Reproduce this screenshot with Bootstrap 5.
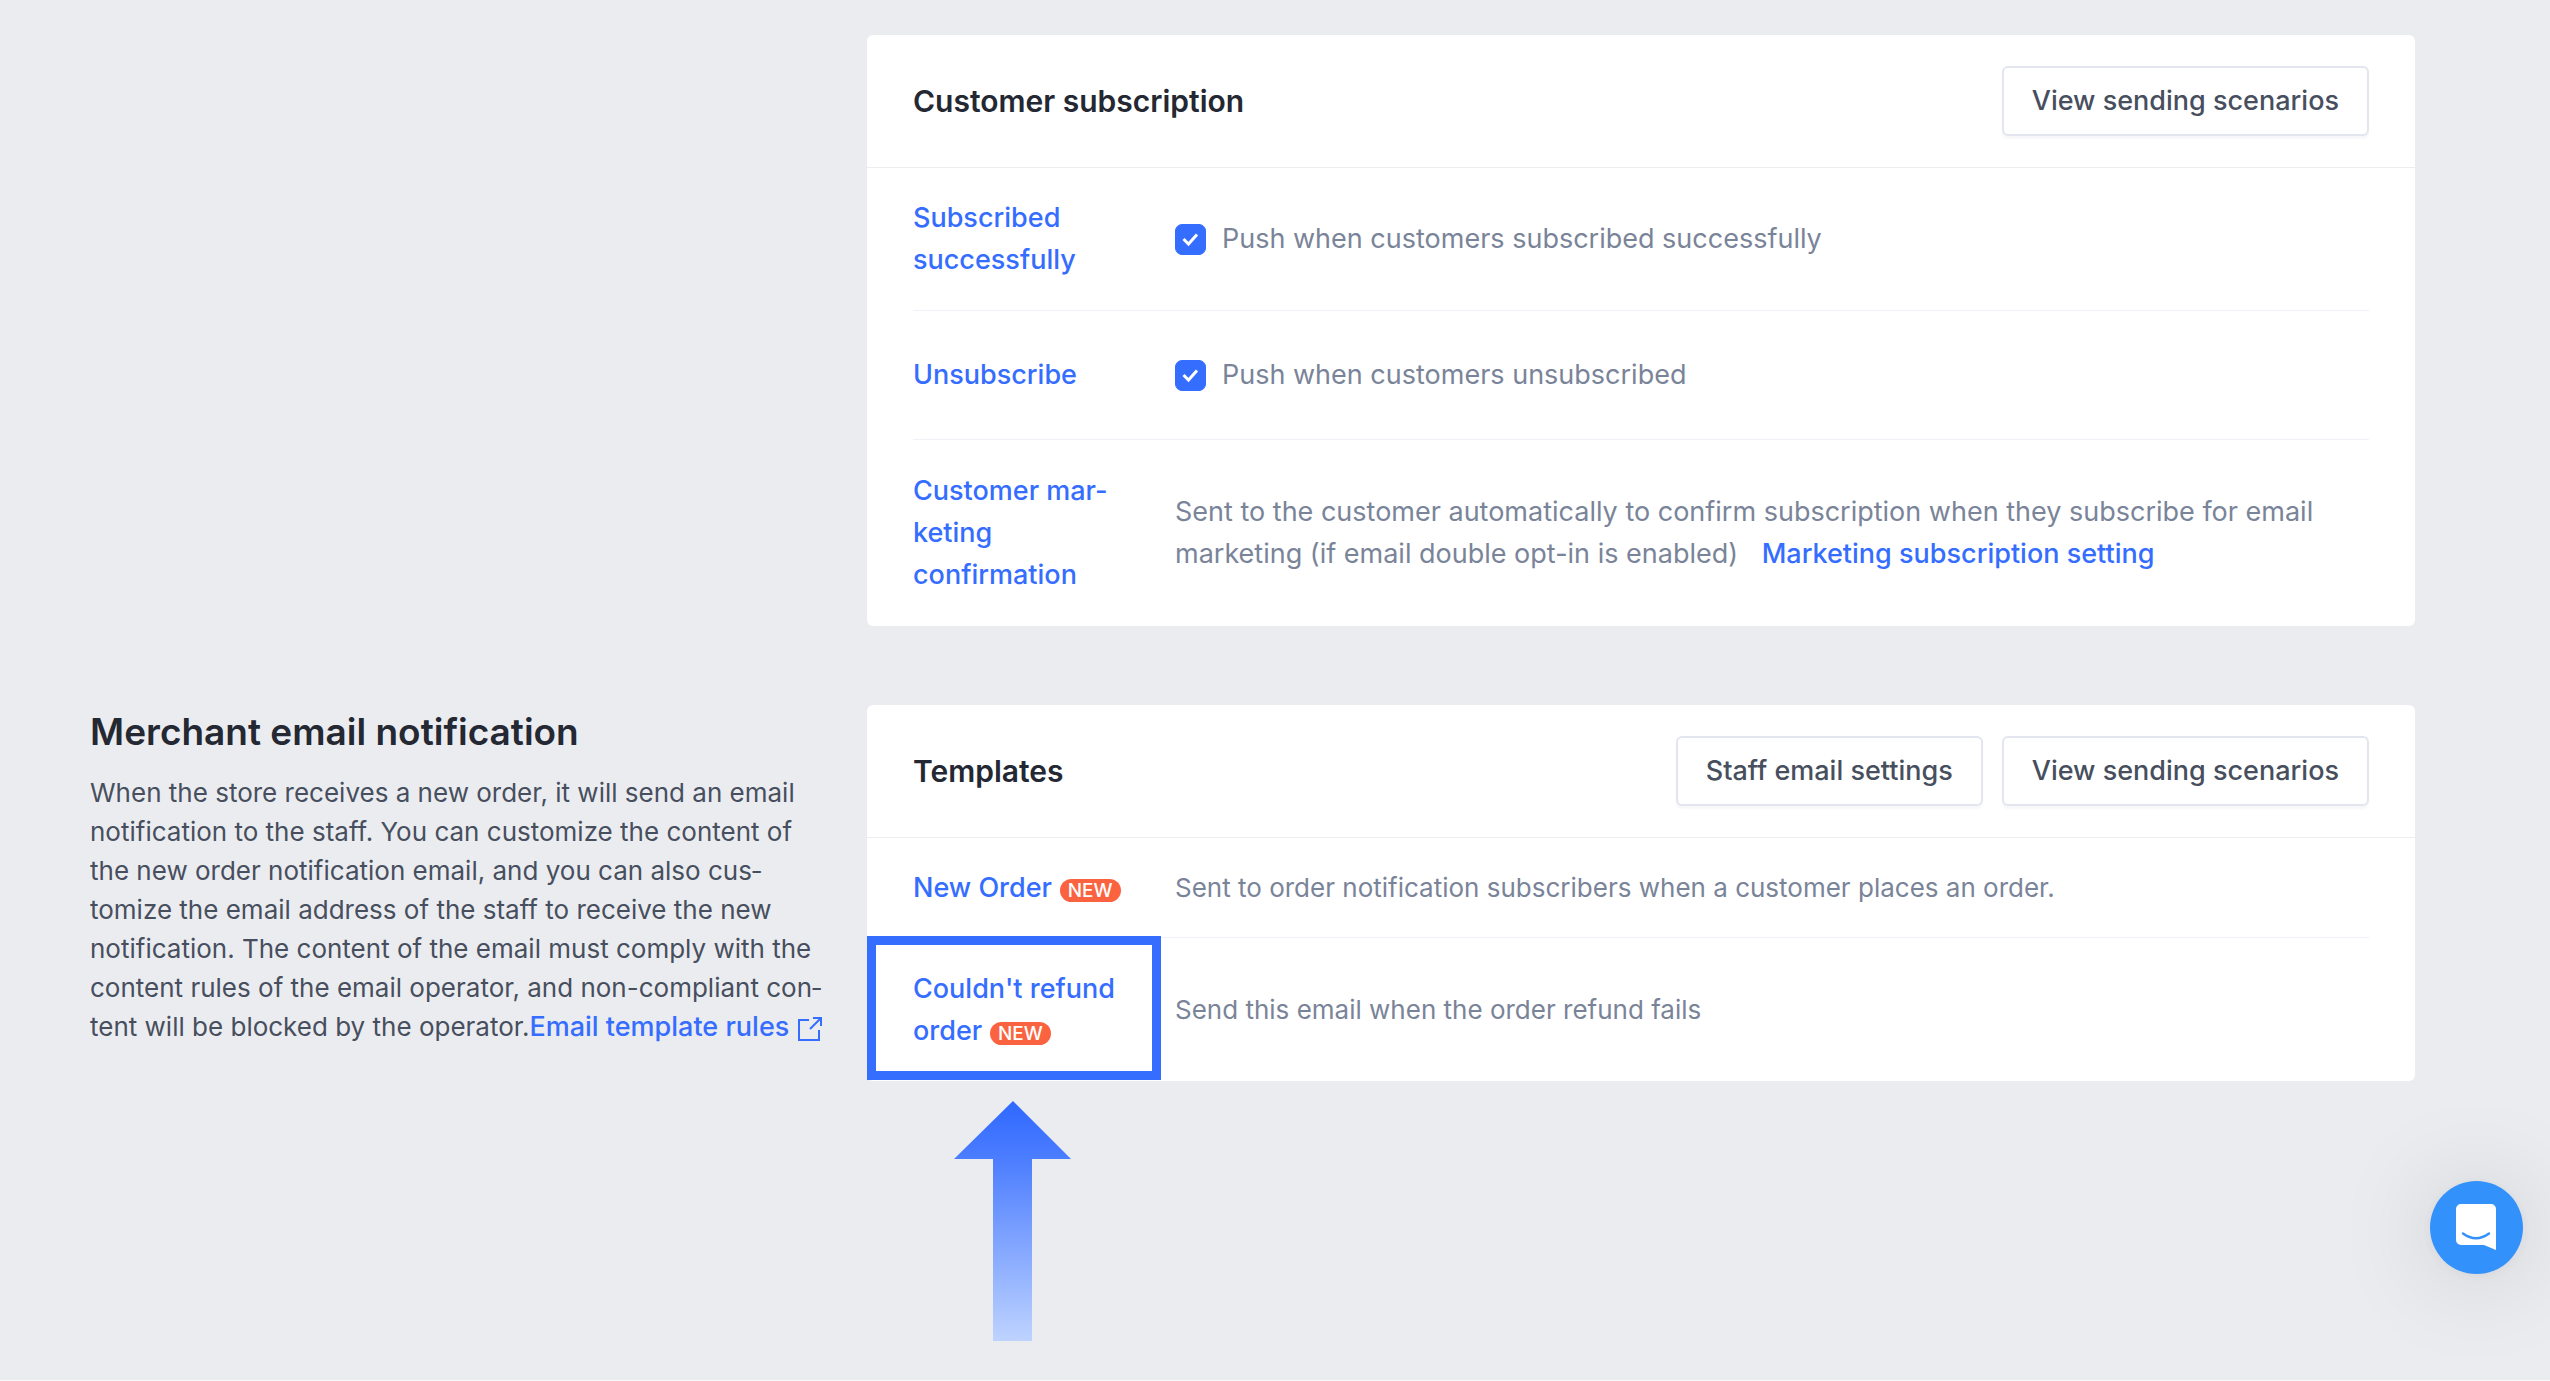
<!DOCTYPE html>
<html lang="en">
<head>
<meta charset="utf-8">
<meta name="viewport" content="width=device-width, initial-scale=1">
<title>Email notifications</title>
<link href="https://cdn.jsdelivr.net/npm/bootstrap@5.3.0/dist/css/bootstrap.min.css" rel="stylesheet">
<style>
  body { background: #ebecf0; color: #474f5e; font-family: Inter, "Liberation Sans", sans-serif; font-size: 26px; line-height: 42px; border-bottom: 1px solid #fafafb; }
  a { color: #356dff; text-decoration: none; font-weight: 500; }
  .page-wrap { padding: 35px 135px 0 90px; }
  .intro { flex: 0 0 777px; padding-right: 34px; }
  .section-gap { margin-top: 79px; }
  .intro h1 { color: #242833; font-size: 37px; font-weight: 600; line-height: 54px; margin-bottom: 14px; }
  .intro p { line-height: 39px; margin: 0; }
  .intro a, .item-name, .text-roomy { font-size: 27px; }
  .panel { border: 0; border-radius: 6px; }
  .panel-head { min-height: 133px; padding: 0 46px; border-bottom: 1px solid #ecedf1; }
  .panel-head h2 { color: #242833; font-size: 30px; font-weight: 600; line-height: 42px; margin: 0; }
  .panel-rows { padding: 0 46px; }
  .item { position: relative; min-height: 144px; color: #7a8499; }
  .item + .item { border-top: 1px solid #f0f1f6; }
  .item-name { flex: 0 0 262px; padding-right: 46px; }
  .item-mid { min-height: 129px; }
  .item-tall { min-height: 187px; }
  .item-short { min-height: 99px; }
  .item-first { min-height: 142px; }
  .btn-plain { height: 70px; padding: 0 28px; color: #474f5e; font-size: 27px; font-weight: 500; background: #fff; border: 2px solid #e3e5ef; border-radius: 6px; box-shadow: 0 3px 2px rgba(30, 40, 80, .03); }
  .btn-row { gap: 19px; }
  .form-check-input.tick { width: 31px; height: 31px; margin: 0 16px 0 0; border-radius: 7px; }
  .form-check-input.tick:checked { background-color: #356dff; border-color: #356dff; background-size: 24px; background-image: url("data:image/svg+xml,%3Csvg xmlns='http://www.w3.org/2000/svg' viewBox='0 0 24 24'%3E%3Cpath fill='none' stroke='%23fff' stroke-width='3' d='m4.500 12 5 5L18 7.500'/%3E%3C/svg%3E"); }
  .badge-new { display: inline-block; width: 61px; height: 23px; padding: 0; border-radius: 12px; background: #fb6340; color: #fff; font-size: 19px; font-weight: 500; line-height: 23px; text-align: center; vertical-align: baseline; }
  .focus-frame { position: absolute; left: -46px; top: -2px; width: 294px; height: 144px; border: 9px solid #356dff; pointer-events: none; }
  .focus-arrow { position: absolute; left: 78px; top: 156px; }
  .chat-btn { position: fixed; right: 27px; bottom: 107px; width: 93px; height: 93px; padding: 0; border: 0; border-radius: 50%; background: #3391fb; box-shadow: 0 2px 12px rgba(0, 0, 0, .06), 0 4px 100px rgba(0, 0, 0, .15); }
  .chat-btn svg { display: block; }
</style>
<script src="https://cdn.jsdelivr.net/npm/bootstrap@5.3.0/dist/js/bootstrap.bundle.min.js"></script>
</head>
<body class="min-vh-100">
<main class="page-wrap">
  <section class="d-flex">
    <div class="intro"></div>
    <div class="card panel flex-grow-1">
      <div class="panel-head d-flex align-items-center justify-content-between">
        <h2>Customer subscription</h2>
        <button type="button" class="btn btn-plain">View sending scenarios</button>
      </div>
      <div class="panel-rows text-roomy">
        <div class="item item-first d-flex align-items-center">
          <div class="item-name"><a href="#">Subscribed successfully</a></div>
          <div class="d-flex align-items-center">
            <input class="form-check-input tick" type="checkbox" id="pushSubscribed" checked>
            <label for="pushSubscribed">Push when customers subscribed successfully</label>
          </div>
        </div>
        <div class="item item-mid d-flex align-items-center">
          <div class="item-name"><a href="#">Unsubscribe</a></div>
          <div class="d-flex align-items-center">
            <input class="form-check-input tick" type="checkbox" id="pushUnsubscribed" checked>
            <label for="pushUnsubscribed">Push when customers unsubscribed</label>
          </div>
        </div>
        <div class="item item-tall d-flex align-items-center">
          <div class="item-name"><a href="#">Customer mar&shy;keting confirmation</a></div>
          <div>Sent to the customer automatically to confirm subscription when they subscribe for email marketing (if email double opt-in is enabled) <a href="#" class="ms-3">Marketing subscription setting</a></div>
        </div>
      </div>
    </div>
  </section>

  <section class="d-flex align-items-start section-gap">
    <div class="intro">
      <h1>Merchant email notification</h1>
      <p>When the store receives a new order, it will send an email notification to the staff. You can customize the content of the new order notification email, and you can also cus&shy;tomize the email address of the staff to receive the new notification. The content of the email must comply with the content rules of the email operator, and non-compliant con&shy;tent will be blocked by the operator.<a href="#">Email template rules <svg width="26" height="26" viewBox="0 0 26 26" fill="none" stroke="currentColor" stroke-width="2" aria-hidden="true"><path d="M12 4H2v20h20V14M13 13 24 2M16 2h8v8"/></svg></a></p>
    </div>
    <div class="card panel flex-grow-1">
      <div class="panel-head d-flex align-items-center justify-content-between">
        <h2>Templates</h2>
        <div class="d-flex btn-row">
          <button type="button" class="btn btn-plain">Staff email settings</button>
          <button type="button" class="btn btn-plain">View sending scenarios</button>
        </div>
      </div>
      <div class="panel-rows">
        <div class="item item-short d-flex align-items-center">
          <div class="item-name text-nowrap"><a href="#">New Order</a> <span class="badge badge-new">NEW</span></div>
          <div>Sent to order notification subscribers when a customer places an order.</div>
        </div>
        <div class="item d-flex align-items-center">
          <div class="item-name"><a href="#">Couldn't refund order</a> <span class="badge badge-new">NEW</span></div>
          <div>Send this email when the order refund fails</div>
          <div class="focus-frame">
            <svg class="focus-arrow" width="117" height="240" viewBox="0 0 117 240" aria-hidden="true">
              <defs><linearGradient id="arrowFade" x1="0" y1="0" x2="0" y2="1"><stop offset="0" stop-color="#2f68ff"/><stop offset=".25" stop-color="#4d7eff"/><stop offset="1" stop-color="#bed3ff"/></linearGradient></defs>
              <path fill="url(#arrowFade)" d="M59 0 117 58H78V240H39V58H0z"/>
            </svg>
          </div>
        </div>
      </div>
    </div>
  </section>
</main>

<button type="button" class="chat-btn" aria-label="Open chat">
  <svg width="93" height="93" viewBox="0 0 93 93" aria-hidden="true">
    <path fill="#fff" d="M31 23H61a5 5 0 0 1 5 5V69L54 64H31a5 5 0 0 1-5-5V28a5 5 0 0 1 5-5z"/>
    <path fill="none" stroke="#3391fb" stroke-width="2.500" stroke-linecap="round" d="M33 52.500Q46 62 59 52.500"/>
  </svg>
</button>
</body>
</html>
